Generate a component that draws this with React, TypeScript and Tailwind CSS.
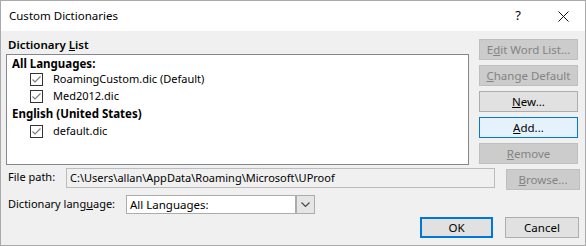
import React from "react";

const font = { fontFamily: '"Noto Sans", "Open Sans", sans-serif' };

function Check() {
  return (
    <span className="w-[13px] h-[13px] border border-[#333333] bg-white flex items-center justify-center shrink-0">
      <svg width="11" height="11" viewBox="0 0 11 11">
        <polyline points="1.5,5.5 4,8 9.5,2.5" fill="none" stroke="#7a7a7a" strokeWidth="1.1" />
      </svg>
    </span>
  );
}

function Btn({
  children,
  kind = "normal",
  className = "",
}: {
  children: React.ReactNode;
  kind?: "normal" | "disabled" | "hover" | "default";
  className?: string;
}) {
  const styles: Record<string, string> = {
    normal: "bg-[#e1e1e1] border border-[#adadad] text-black",
    disabled: "bg-[#cccccc] border border-[#bfbfbf] text-[#838383]",
    hover: "bg-[#e5f1fb] border border-[#0078d7] text-black",
    default: "bg-[#e1e1e1] border-2 border-[#0078d7] text-black",
  };
  return (
    <div className={`flex items-center justify-center text-[11.5px] leading-none ${styles[kind]} ${className}`}>
      {children}
    </div>
  );
}

function Item({ h, children }: { h: string; children: React.ReactNode }) {
  return (
    <div className={`${h} flex items-center pl-[18px] gap-[10px] text-[11px]`}>
      <Check />
      <span>{children}</span>
    </div>
  );
}

export default function App() {
  return (
    <div
      className="w-[586px] h-[246px] border border-[#aaaaaa] bg-[#f0f0f0] flex flex-col text-black text-[11px] overflow-hidden"
      style={font}
    >
      {/* Title bar */}
      <div className="h-[30px] bg-white flex items-center pl-[8px] shrink-0">
        <span className="text-[11.5px]">Custom Dictionaries</span>
        <span className="ml-auto mr-[37px] text-[13px]">?</span>
        <svg width="11" height="11" viewBox="0 0 11 11" className="mr-[16px]">
          <path d="M0.5 0.5 L10.5 10.5 M10.5 0.5 L0.5 10.5" stroke="#111" strokeWidth="1" />
        </svg>
      </div>

      {/* Top section */}
      <div className="flex pl-[5px]">
        <div className="w-[463px] pt-[6px] flex flex-col">
          <div className="h-[16px] leading-[16px] pl-[2px] font-semibold text-[11.5px]">
            Dictionary <u>L</u>ist
          </div>
          <div className="mt-[1px] h-[111px] border border-[#828790] bg-white pl-[5px] text-[11.5px]">
            <div className="h-[17px] flex items-center font-bold">All Languages:</div>
            <Item h="h-[15px]">RoamingCustom.dic (Default)</Item>
            <Item h="h-[18px]">Med2012.dic</Item>
            <div className="h-[18px] flex items-center font-bold">English (United States)</div>
            <Item h="h-[16px]">default.dic</Item>
          </div>
        </div>
        <div className="ml-[10px] pt-[8px] w-[99px] flex flex-col gap-[5px]">
          <Btn kind="disabled" className="h-[21px]">
            E<u>d</u>it Word List...
          </Btn>
          <Btn kind="disabled" className="h-[21px]">
            <u>C</u>hange Default
          </Btn>
          <Btn className="h-[21px]">
            <u>N</u>ew...
          </Btn>
          <Btn kind="hover" className="h-[21px]">
            <u>A</u>dd...
          </Btn>
          <Btn kind="disabled" className="h-[21px]">
            <u>R</u>emove
          </Btn>
        </div>
      </div>

      {/* File path */}
      <div className="flex items-start pl-[7px] mt-[3px]">
        <div className="w-[58px] h-[20px] leading-[18px]">File path:</div>
        <div className="w-[429px] h-[20px] border border-[#bcbcbc] bg-[#f0f0f0] pl-[3px] leading-[18px] whitespace-nowrap overflow-hidden">
          C:\Users\allan\AppData\Roaming\Microsoft\UProof
        </div>
        <Btn kind="disabled" className="ml-[11px] mt-[1px] w-[74px] h-[21px]">
          <u>B</u>rowse...
        </Btn>
      </div>

      {/* Dictionary language */}
      <div className="flex items-center pl-[7px] mt-[5px]">
        <div className="w-[118px]">
          Dictionary lang<u>u</u>age:
        </div>
        <div className="w-[189px] h-[19px] border border-[#acacac] bg-white flex">
          <div className="flex-1 pl-[3px] leading-[17px] text-[11.5px]">All Languages:</div>
          <div className="w-[19px] bg-[#e5e5e5] border-l-2 border-[#acacac] flex items-center justify-center">
            <svg width="9" height="5" viewBox="0 0 9 5">
              <polyline points="0.5,0.5 4.5,4.5 8.5,0.5" fill="none" stroke="#444" strokeWidth="1.1" />
            </svg>
          </div>
        </div>
      </div>

      {/* OK / Cancel */}
      <div className="flex justify-end pr-[6px] mt-[3px] gap-[12px]">
        <Btn kind="default" className="w-[73px] h-[21px]">
          OK
        </Btn>
        <Btn className="w-[74px] h-[21px]">Cancel</Btn>
      </div>
    </div>
  );
}
